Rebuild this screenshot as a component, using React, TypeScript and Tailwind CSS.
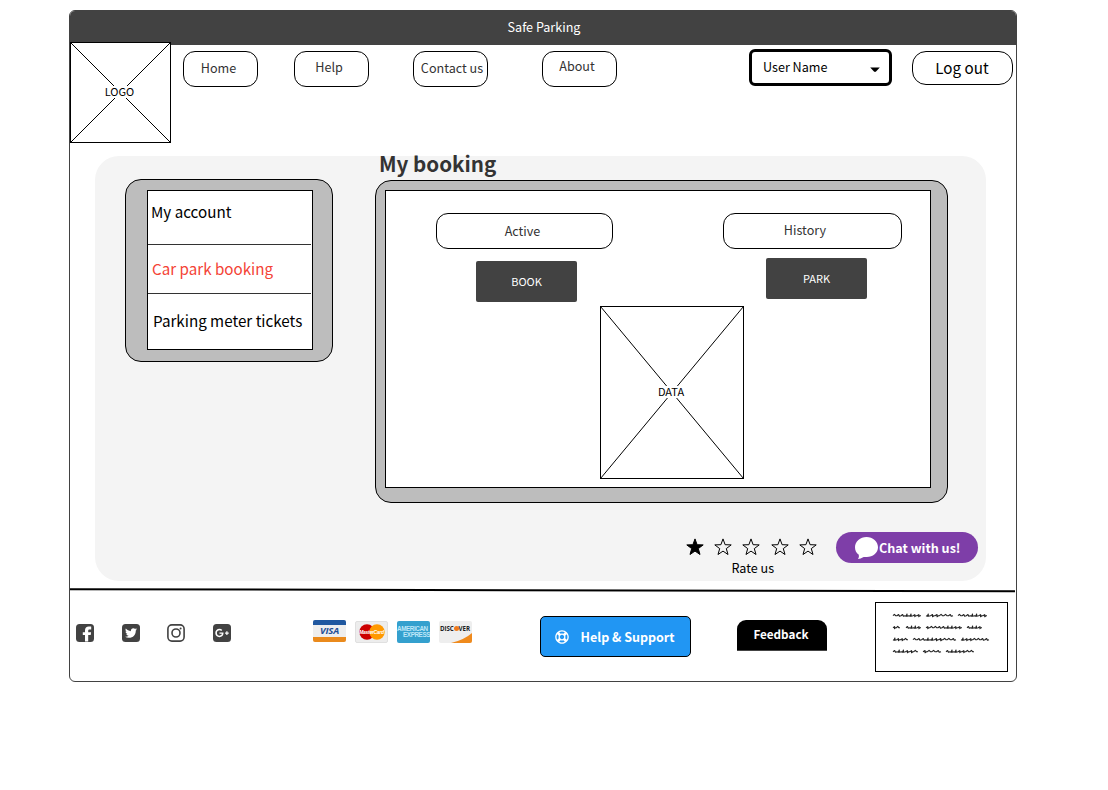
import type { ReactNode } from "react";
import { FaTwitter, FaGooglePlusG, FaRegLifeRing } from "react-icons/fa";

function Pill({ children, className }: { children: ReactNode; className: string }) {
  return (
    <button className={`flex shrink-0 justify-center whitespace-nowrap rounded-[12px] border border-black bg-white text-[12.6px] leading-[20px] text-[#333333] ${className}`}>
      {children}
    </button>
  );
}

function Placeholder({ label, w, h, className, gap }: { label: string; w: number; h: number; className: string; gap: string }) {
  return (
    <div className={`relative shrink-0 bg-white ${className}`}>
      <svg width={w} height={h} className="block">
        <path d={`M.5 .5L${w - 0.5} ${h - 0.5}M${w - 0.5} .5L.5 ${h - 0.5}`} stroke="#000" strokeWidth="1" />
        <rect x=".5" y=".5" width={w - 1} height={h - 1} fill="none" stroke="#000" />
      </svg>
      <span className={`absolute h-[12px] bg-white text-center text-[11px] leading-[10px] text-black ${gap}`}>{label}</span>
    </div>
  );
}

function Star({ filled }: { filled?: boolean }) {
  return (
    <svg width="18" height="18" viewBox="0 0 18 18">
      <path
        d="M9 .9L11.1 6.7L17.2 6.9L12.3 10.6L14 16.5L9 13.1L4 16.5L5.7 10.6L.8 6.9L6.9 6.7Z"
        fill={filled ? "#000" : "none"}
        stroke="#000"
        strokeWidth="1"
      />
    </svg>
  );
}

function SocialBox({ children }: { children?: ReactNode }) {
  return <span className="flex h-[18px] w-[18px] items-center justify-center rounded-[3.5px] bg-[#424242] text-white">{children}</span>;
}

const words: number[][][] = [
  [[18, 28], [51, 27], [83, 29]],
  [[18, 7], [31, 15], [51, 36], [92, 15]],
  [[18, 15], [38, 43], [86, 28]],
  [[18, 25], [48, 18], [71, 28]],
];

function squiggle(x: number, y: number, width: number, seed: number) {
  const n = Math.max(2, Math.round(width / 4.2));
  const s = width / n;
  let d = `M${x} ${y + 0.5}`;
  for (let i = 0; i < n; i++) {
    const kind = (i * 3 + seed * 5 + (i >> 1)) % 4;
    if (kind === 0) d += `l${s * 0.35} -1.4l${s * 0.3} 1.4l${s * 0.35} 0`;
    else if (kind === 1) d += `l${s * 0.45} -1.1l0 2.1l${s * 0.3} -1l${s * 0.25} 0`;
    else if (kind === 2) d += `l${s * 0.3} .5l${s * 0.2} -2.2l0 2.2l${s * 0.5} -.5`;
    else d += `l${s * 0.4} -1.2l${s * 0.2} 1.8l${s * 0.4} -.6`;
  }
  return d;
}

function Scribbles() {
  return (
    <svg width="131" height="68" className="block" fill="none" stroke="#222" strokeWidth="1.1" strokeLinejoin="round">
      {words.map((row, r) =>
        row.map(([x, w], i) => <path key={`${r}-${i}`} d={squiggle(x - 1, 12.2 + r * 12, w, r + i * 2)} />)
      )}
    </svg>
  );
}

export default function App() {
  return (
    <div className="h-[790px] w-[1108px] bg-white pl-[69px] pt-[10px] font-['Noto_Sans_CJK_SC',sans-serif]">
      <div className="flex h-[672px] w-[948px] flex-col rounded-[6px] border border-[#424242]">
        <div className="flex h-[34px] shrink-0 justify-center rounded-t-[5px] bg-[#424242] pt-[7px] text-[12.6px] leading-[18px] text-white">
          <span className="pl-[2px]">Safe Parking</span>
        </div>

        <header className="flex h-[111px] shrink-0 items-start">
          <Placeholder label="LOGO" w={101} h={101} className="-mt-[3px] h-[101px] w-[101px]" gap="left-[34px] top-[44px] w-[31px]" />
          <Pill className="ml-[12px] mt-[6px] h-[36px] w-[75px] pr-[4px] pt-[6px]">Home</Pill>
          <Pill className="ml-[36px] mt-[6px] h-[36px] w-[75px] pr-[5px] pt-[5px]">Help</Pill>
          <Pill className="ml-[44px] mt-[6px] h-[36px] w-[75px] pl-[3px] pt-[6px]">Contact us</Pill>
          <Pill className="ml-[54px] mt-[6px] h-[36px] w-[75px] pr-[5px] pt-[4px]">About</Pill>
          <button className="ml-[132px] mt-[4px] flex h-[37px] w-[143px] justify-between rounded-[6px] border-[3px] border-black pl-[11px] pr-[9px] pt-[5px] text-[12.6px] leading-[20px] text-black">
            <span>User Name</span>
            <svg width="10" height="6" className="mt-[10px]"><path d="M.2 .5H9.8L6 4.6Q5 5.4 4 4.6Z" /></svg>
          </button>
          <button className="ml-[20px] mt-[6px] flex h-[34px] w-[101px] justify-center rounded-[14px] border border-black pr-[1px] pt-[3px] text-[15.2px] leading-[24px] text-black">Log out</button>
        </header>

        <main className="ml-[25px] flex h-[425px] w-[891px] shrink-0 rounded-[24px] bg-[#f4f4f4] pl-[30px]">
          <aside className="mt-[23px] h-[183px] w-[208px] shrink-0 rounded-[16px] border border-black bg-[#bdbdbd] pl-[21px] pt-[10px]">
            <nav className="flex h-[160px] w-[166px] flex-col border border-black bg-white text-[15.2px] leading-[24px] text-black">
              <a className="mr-px h-[54px] shrink-0 border-b border-[#333] pl-[3px] pt-[8px]">My account</a>
              <a className="mr-px h-[49px] shrink-0 border-b border-[#333] pl-[4px] pt-[11px] text-[#f44336]">Car park booking</a>
              <a className="whitespace-nowrap pl-[5px] pt-[14px]">Parking meter tickets</a>
            </nav>
          </aside>

          <section className="ml-[42px] w-[611px] shrink-0">
            <h1 className="h-[24px] pl-[4px] text-[20.6px] font-bold leading-[14px] text-[#333]">My booking</h1>
            <div className="h-[323px] w-[573px] rounded-[16px] border border-black bg-[#bdbdbd] pl-[9px] pt-[9px]">
              <div className="h-[298px] w-[546px] border border-black bg-white pt-[22px]">
                <div className="flex h-[93px] pl-[50px]">
                  <div className="flex w-[177px] flex-col items-center">
                    <Pill className="h-[36px] w-[177px] pr-[4px] pt-[7px]">Active</Pill>
                    <button className="mr-[-4px] mt-[12px] flex h-[41px] w-[101px] items-center justify-center rounded-[2px] bg-[#424242] text-[11px] text-white">BOOK</button>
                  </div>
                  <div className="ml-[110px] flex w-[179px] flex-col items-center">
                    <Pill className="h-[36px] w-[179px] pr-[15px] pt-[6px]">History</Pill>
                    <button className="mr-[-8px] mt-[9px] flex h-[41px] w-[101px] items-center justify-center rounded-[2px] bg-[#424242] text-[11px] text-white">PARK</button>
                  </div>
                </div>
                <Placeholder label="DATA" w={144} h={173} className="ml-[214px] h-[173px] w-[144px]" gap="left-[57px] top-[80px] w-[28px]" />
              </div>
            </div>
            <div className="flex pl-[310.5px] pt-[29px]">
              <div className="w-[133.5px] pt-[6px]">
                <div className="flex gap-[10.4px]">
                  <Star filled /><Star /><Star /><Star /><Star />
                </div>
                <div className="mt-[2px] pl-[1px] text-center text-[12.6px] leading-[20px] text-black">Rate us</div>
              </div>
              <button className="ml-[17px] flex h-[31px] w-[142px] shrink-0 rounded-full bg-[#7e3ea8] pl-[19px] text-[12.6px] font-bold leading-[31px] text-white">
                <svg width="23" height="23" viewBox="0 0 23 23" className="mt-[5px] shrink-0">
                  <path d="M11.5 0C17.8 0 23 4.6 23 10.2S17.8 20 11.8 20C9.8 20 8.8 19.8 7.6 20.6Q6 21.8 3 22Q4.4 20 3.8 17.8C1.2 16 0 13.2 0 10.2C0 4.6 5.2 0 11.5 0Z" fill="#fff" />
                </svg>
                <span className="ml-px whitespace-nowrap">Chat with us!</span>
              </button>
            </div>
          </section>
        </main>

        <svg width="946" height="5" className="mt-[7px] block shrink-0"><path d="M0 1.2L945 3.2" stroke="#000" strokeWidth="2" /></svg>

        <footer className="flex h-[88px] shrink-0 items-start pl-[6px]">
          <div className="mt-[31px] flex w-[155px] justify-between">
            <SocialBox>
              <svg width="18" height="18" viewBox="0 0 18 18"><path d="M9 17.4V11H6.8V8.2H9V6.3C9 4 10.4 2.6 12.8 2.6H15.2V5.4H13.7C12.6 5.4 12.2 5.8 12.2 6.7V8.2H15.1L14.7 11H12.2V17.4Z" fill="#fff" /></svg>
            </SocialBox>
            <SocialBox><FaTwitter size={12} /></SocialBox>
            <svg width="18" height="18" viewBox="0 0 18 18" fill="none" stroke="#424242" strokeWidth="1.6">
              <rect x=".9" y=".9" width="16.2" height="16.2" rx="4" />
              <circle cx="9" cy="9" r="4" />
              <circle cx="13.6" cy="4.4" r="1" fill="#424242" stroke="none" />
            </svg>
            <SocialBox><FaGooglePlusG size={14} /></SocialBox>
          </div>

          <div className="ml-[82px] mt-[28px] flex shrink-0 gap-[9px]">
            <div className="-mt-px mb-px flex h-[22px] w-[33px] flex-col overflow-hidden rounded-[2px] bg-[#eeeeee]">
              <span className="h-[5px] shrink-0 bg-[#2058a0]" />
              <span className="h-[12px] shrink-0 text-center font-['Open_Sans',sans-serif] text-[9.5px] font-bold italic leading-[12px] tracking-[-0.2px] text-[#1f4f96]">VISA</span>
              <span className="h-[5px] shrink-0 bg-[#ea8a1c]" />
            </div>
            <div className="relative flex h-[22px] w-[33px] items-center justify-center rounded-[2px] border border-[#e0e0e0] bg-[#ededed]">
              <svg width="26" height="16" className="shrink-0"><circle cx="8" cy="8" r="7.7" fill="#c00" /><circle cx="18" cy="8" r="7.7" fill="#f90" /></svg>
              <span className="absolute inset-x-0 top-[5px] text-center font-['Liberation_Sans',sans-serif] text-[5px] font-bold italic leading-[10px] tracking-[-0.3px] text-white">MasterCard</span>
            </div>
            <div className="h-[22px] w-[33px] overflow-hidden rounded-[2px] bg-[#34a0ce] pt-[5px] font-['Liberation_Sans',sans-serif] text-[6.3px] font-bold leading-[6px] tracking-[-0.4px] text-[#bfe7f8]">
              <div className="whitespace-nowrap">AMERICAN</div>
              <div className="text-right">EXPRESS</div>
            </div>
            <div className="relative h-[22px] w-[33px] overflow-hidden rounded-[2px] bg-[#eeeeee]">
              <svg width="33" height="22" className="block"><path d="M12 22Q25 19 33 12V22Z" fill="#ef8a1d" /></svg>
              <span className="absolute left-[1px] top-[3px] flex items-center whitespace-nowrap font-['Open_Sans',sans-serif] text-[6.2px] font-bold leading-[9px] tracking-[-0.1px] text-[#222]">
                DISC<i className="inline-block h-[5px] w-[5px] rounded-full bg-[#ef7a1d]" />VER
              </span>
            </div>
          </div>

          <button className="ml-[68px] mt-[23px] flex h-[41px] w-[151px] shrink-0 rounded-[5px] border border-black bg-[#2196f3] pl-[14px] text-[12.5px] font-bold leading-[40px] text-white">
            <FaRegLifeRing size={14} className="mt-[13px]" />
            <span className="ml-[11.5px] whitespace-nowrap">Help &amp; Support</span>
          </button>
          <button className="ml-[46px] mt-[27px] h-[31px] w-[90px] shrink-0 rounded-t-[9px] border-b border-[#444] bg-black pr-[2px] pb-[3px] text-[11.7px] font-bold leading-[27px] text-white">Feedback</button>
          <div className="ml-[48px] mt-[9px] h-[70px] w-[133px] shrink-0 border border-black bg-white"><Scribbles /></div>
        </footer>
      </div>
    </div>
  );
}
